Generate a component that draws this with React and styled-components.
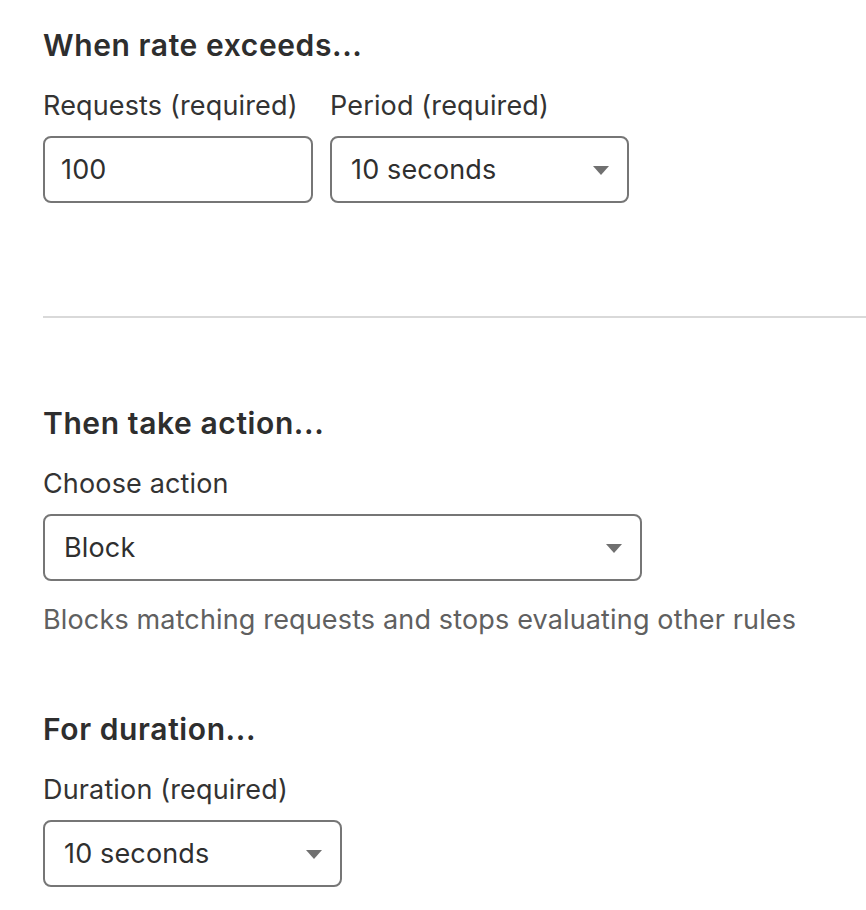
import React from 'react'
import styled, { createGlobalStyle } from 'styled-components'

const GlobalStyle = createGlobalStyle`
  html, body {
    margin: 0;
    padding: 0;
    background: #ffffff;
  }
  body {
    font-family: Inter, "Noto Sans", "Liberation Sans", sans-serif;
    color: #313131;
    -webkit-font-smoothing: antialiased;
  }
`

const Page = styled.div`
  padding: 26px 0 40px 43px;
  display: flex;
  flex-direction: column;
`

const Section = styled.section`
  display: flex;
  flex-direction: column;
  margin-top: ${props => props.marginTop || '0'};
`

const Heading = styled.h2`
  margin: 0 0 24px;
  font-size: 30px;
  line-height: 38px;
  font-weight: 600;
  color: #2e2e2e;
  letter-spacing: 0.6px;
`

const FieldRow = styled.div`
  display: flex;
  flex-direction: row;
  gap: 17px;
`

const Field = styled.div`
  display: flex;
  flex-direction: column;
  gap: 12px;
`

const Label = styled.label`
  font-size: 27px;
  line-height: 36px;
  letter-spacing: 0.15px;
  color: #333333;
`

const Box = styled.div`
  box-sizing: border-box;
  width: ${props => props.width};
  height: 67px;
  border: 2px solid #767676;
  border-radius: 8px;
  background: #fff;
  display: flex;
  align-items: center;
  justify-content: space-between;
  padding: 0 18px 0 ${props => props.padLeft || '16px'};
  font-size: 27px;
  letter-spacing: 0.15px;
  color: #2f2f2f;
`

const Caret = styled.span`
  width: 0;
  height: 0;
  border-left: 8px solid transparent;
  border-right: 8px solid transparent;
  border-top: 9px solid #707070;
  margin-top: 2px;
`

const Divider = styled.hr`
  margin: 113px 0 0;
  border: none;
  height: 2px;
  background: #d9d9d9;
`

const Help = styled.p`
  margin: 21px 0 0;
  font-size: 27px;
  line-height: 36px;
  letter-spacing: 0.15px;
  color: #606060;
`

const Select = ({ width, value }) => (
  <Box width={width} padLeft="19px">
    <span>{value}</span>
    <Caret />
  </Box>
)

const App = () => (
  <>
    <GlobalStyle />
    <Page>
      <Section>
        <Heading>When rate exceeds...</Heading>
        <FieldRow>
          <Field>
            <Label>Requests (required)</Label>
            <Box width="270px">100</Box>
          </Field>
          <Field>
            <Label>Period (required)</Label>
            <Select width="299px" value="10 seconds" />
          </Field>
        </FieldRow>
      </Section>
      <Divider />
      <Section marginTop="86px">
        <Heading>Then take action...</Heading>
        <Field>
          <Label>Choose action</Label>
          <Select width="599px" value="Block" />
        </Field>
        <Help>Blocks matching requests and stops evaluating other rules</Help>
      </Section>
      <Section marginTop="72px">
        <Heading>For duration...</Heading>
        <Field>
          <Label>Duration (required)</Label>
          <Select width="299px" value="10 seconds" />
        </Field>
      </Section>
    </Page>
  </>
)

export default App
